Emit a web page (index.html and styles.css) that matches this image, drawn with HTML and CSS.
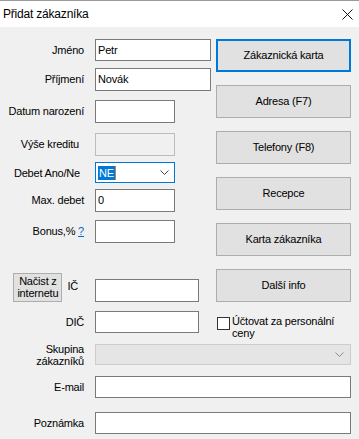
FILE: index.html
```html
<!DOCTYPE html>
<html lang="cs">
<head>
<meta charset="utf-8">
<title>Přidat zákazníka</title>
<link rel="stylesheet" href="styles.css">
</head>
<body>
<div class="window">
  <header class="titlebar">
    <span class="title">Přidat zákazníka</span>
    <svg class="close" width="11" height="11" viewBox="0 0 11 11"><path d="M0.5 0.5 L10.5 10.5 M10.5 0.5 L0.5 10.5" stroke="#111" stroke-width="1" fill="none"/></svg>
  </header>
  <main class="form">
    <div class="side">
      <div class="btn focus">Zákaznická karta</div>
      <div class="btn">Adresa (F7)</div>
      <div class="btn">Telefony (F8)</div>
      <div class="btn">Recepce</div>
      <div class="btn">Karta zákazníka</div>
      <div class="btn">Další info</div>
      <div class="check"><span class="box"></span><span class="check-text">Účtovat za personální ceny</span></div>
    </div>

    <div class="lbl">Jméno</div>
    <div class="tb w-long h22">Petr</div>

    <div class="lbl">Příjmení</div>
    <div class="tb w-long">Novák</div>

    <div class="lbl lbl-datum">Datum narození</div>
    <div class="tb w-short"></div>

    <div class="lbl lbl-vyse">Výše kreditu</div>
    <div class="tb w-short disabled"></div>

    <div class="lbl lbl-debet">Debet Ano/Ne</div>
    <div class="select w-short"><span class="sel-text">NE</span><svg class="chev" width="9" height="5" viewBox="0 0 9 5"><path d="M0.5 0.5 L4.5 4.5 L8.5 0.5" stroke="#444" fill="none"/></svg></div>

    <div class="lbl">Max. debet</div>
    <div class="tb w-short">0</div>

    <div class="lbl">Bonus,%&nbsp;<a class="help" href="#">?</a></div>
    <div class="tb w-short"></div>

    <div class="lbl lbl-ic"><span class="small-btn">Načist z<br>internetu</span><span class="ic-text">IČ</span></div>
    <div class="tb w-mid ic-input"></div>

    <div class="lbl">DIČ</div>
    <div class="tb w-mid h22"></div>

    <div class="lbl lbl-multi">Skupina<br>zákazníků</div>
    <div class="select wide disabled-select"><svg class="chev" width="9" height="5" viewBox="0 0 9 5"><path d="M0.5 0.5 L4.5 4.5 L8.5 0.5" stroke="#8a8a8a" fill="none"/></svg></div>

    <div class="lbl">E-mail</div>
    <div class="tb wide h22"></div>

    <div class="lbl">Poznámka</div>
    <div class="tb wide h22"></div>
  </main>
</div>
</body>
</html>
```
FILE: styles.css
```css
html, body {
  margin: 0;
  padding: 0;
}
body {
  background: #f0f0f0;
  font-family: "Liberation Sans", Arial, sans-serif;
  font-size: 11px;
  letter-spacing: -0.2px;
  color: #000;
}
.window {
  width: 359px;
  height: 439px;
  overflow: hidden;
}
.titlebar {
  height: 26px;
  background: #fff;
  border-top: 1px solid #9b9b9b;
  display: flex;
  align-items: center;
  justify-content: space-between;
  padding: 0 6px 0 3px;
}
.title {
  font-size: 12px;
}
.close {
  display: block;
  margin-top: 1px;
}
.form {
  display: grid;
  grid-template-columns: 90px 116px 135px;
  grid-template-rows: 29px 32px 33px 29px 27px 31px 53px 38px 33px 32px 36px 27px;
  column-gap: 5px;
  padding-top: 12px;
}
.side {
  grid-column: 3;
  grid-row: 1 / 10;
  display: flex;
  flex-direction: column;
  gap: 13px;
}
.btn {
  height: 33px;
  box-sizing: border-box;
  background: #e1e1e1;
  border: 1px solid #adadad;
  display: flex;
  align-items: center;
  justify-content: center;
  padding-bottom: 1px;
}
.btn.focus {
  border: 2px solid #0078d7;
}
.check {
  display: flex;
  align-items: flex-start;
  gap: 2px;
  margin-left: 1px;
}
.box {
  flex: none;
  width: 13px;
  height: 13px;
  box-sizing: border-box;
  border: 1px solid #333;
  background: #fff;
  margin-top: 2px;
}
.check-text {
  line-height: 12px;
  width: 112px;
}
.lbl {
  height: 23px;
  box-sizing: border-box;
  display: flex;
  align-items: center;
  justify-content: flex-end;
  padding-right: 6px;
  padding-bottom: 2px;
  white-space: nowrap;
}
.lbl-vyse {
  padding-right: 11px;
}
.lbl-debet {
  padding-right: 10px;
}
.lbl-ic {
  height: 29px;
  padding-right: 12px;
  padding-bottom: 0;
}
.ic-text {
  margin-left: 5px;
  padding-bottom: 3px;
}
.small-btn {
  width: 49px;
  height: 29px;
  box-sizing: border-box;
  background: #e1e1e1;
  border: 1px solid #adadad;
  line-height: 12px;
  text-align: center;
  padding-top: 1px;
}
.lbl-multi {
  height: 21px;
  padding-bottom: 0;
  text-align: right;
  line-height: 12px;
}
.help {
  color: #0066cc;
  text-decoration: underline;
}
.tb {
  height: 23px;
  box-sizing: border-box;
  border: 1px solid #7a7a7a;
  background: #fff;
  padding: 0 0 1px 2px;
  display: flex;
  align-items: center;
}
.h22 {
  height: 22px;
}
.w-long {
  width: 116px;
}
.w-short {
  width: 80px;
}
.w-mid {
  width: 104px;
}
.wide {
  grid-column: 2 / 4;
}
.ic-input {
  margin-top: 6px;
}
.tb.disabled {
  background: #f0f0f0;
  border-color: #bcbcbc;
}
.select {
  height: 21px;
  box-sizing: border-box;
  border: 1px solid #0078d7;
  background: #fff;
  display: flex;
  align-items: center;
  justify-content: space-between;
  padding: 0 5px 0 2px;
}
.sel-text {
  background: #0078d7;
  color: #fff;
  padding: 0 1px;
  line-height: 14px;
  border-right: 1px solid #c8833f;
}
.select.disabled-select {
  background: #e5e5e5;
  border-color: #cccccc;
  justify-content: flex-end;
  padding-right: 6px;
}
.chev {
  display: block;
}
```
